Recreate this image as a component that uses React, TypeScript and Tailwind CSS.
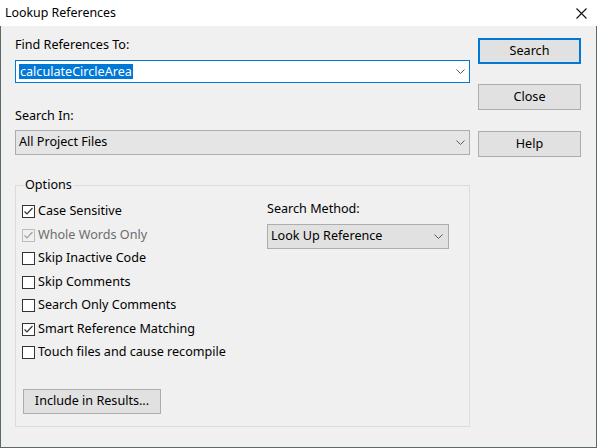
import React from "react";

const font = { fontFamily: '"Noto Sans", "Liberation Sans", sans-serif' };

function Chevron() {
  return (
    <svg width="9" height="5" viewBox="0 0 9 5" className="shrink-0">
      <polyline points="0.5,0.5 4.5,4.5 8.5,0.5" fill="none" stroke="#5a5a5a" strokeWidth="1" />
    </svg>
  );
}

function Check({ checked, disabled, label }: { checked?: boolean; disabled?: boolean; label: string }) {
  return (
    <div className="flex items-center h-[23.5px]">
      <div
        className={
          disabled
            ? "w-[13px] h-[13px] border border-[#bcbcbc] bg-[#f0f0f0] flex items-center justify-center"
            : "w-[13px] h-[13px] border border-[#333333] bg-white flex items-center justify-center"
        }
      >
        {checked && (
          <svg width="11" height="11" viewBox="0 0 11 11">
            <polyline
              points="1.5,5.5 4,8 9.5,2"
              fill="none"
              stroke={disabled ? "#a0a0a0" : "#333333"}
              strokeWidth="1.2"
            />
          </svg>
        )}
      </div>
      <span className={disabled ? "ml-[3px] text-[#6d6d6d]" : "ml-[3px] text-black"}>{label}</span>
    </div>
  );
}

function Button({ children, focused, className }: { children: React.ReactNode; focused?: boolean; className?: string }) {
  return (
    <div
      className={
        (focused
          ? "border-2 border-[#0078d7] "
          : "border border-[#adadad] ") +
        "bg-[#e1e1e1] flex items-center justify-center " +
        (className ?? "")
      }
    >
      {children}
    </div>
  );
}

export default function App() {
  return (
    <div className="w-[597px] h-[448px] bg-[#f0f0f0] text-[12.6px] text-black flex flex-col overflow-hidden" style={font}>
      {/* Title bar */}
      <div className="h-[26px] bg-white flex items-center justify-between pl-[5px] pr-[10px] shrink-0">
        <span className="text-[12.4px]">Lookup References</span>
        <svg width="11" height="11" viewBox="0 0 11 11">
          <path d="M0.5 0.5 L10.5 10.5 M10.5 0.5 L0.5 10.5" stroke="#111" strokeWidth="1.1" />
        </svg>
      </div>

      <div className="flex-1 flex border-l border-r border-b border-[#5b6b63] min-h-0">
        {/* Left column */}
        <div className="ml-[14px] w-[455px] flex flex-col">
          <div className="mt-[11px] h-[16px] leading-[16px]">Find References To:</div>
          <div className="mt-[7px] h-[23px] border border-[#0078d7] bg-white flex items-center justify-between pl-[3px] pr-[4px]">
            <span className="bg-[#0078d7] text-white leading-[15px] h-[15px] px-[1px]">calculateCircleArea</span>
            <Chevron />
          </div>
          <div className="mt-[25px] h-[16px] leading-[16px]">Search In:</div>
          <div className="mt-[6px] h-[25px] border border-[#adadad] bg-[#e5e5e5] flex items-center justify-between pl-[3px] pr-[4px]">
            <span>All Project Files</span>
            <Chevron />
          </div>

          {/* Options group */}
          <div className="mt-[30px] h-[242px] border border-[#dcdcdc] relative flex">
            <span className="absolute left-[8px] top-[-9px] px-[1px] bg-[#f0f0f0] leading-[16px]">Options</span>
            <div className="ml-[6px] mt-[14px] w-[245px] flex flex-col">
              <Check checked label="Case Sensitive" />
              <Check checked disabled label="Whole Words Only" />
              <Check label="Skip Inactive Code" />
              <Check label="Skip Comments" />
              <Check label="Search Only Comments" />
              <Check checked label="Smart Reference Matching" />
              <Check label="Touch files and cause recompile" />
              <Button className="mt-[24px] ml-[1px] w-[138px] h-[25px]">Include in Results...</Button>
            </div>
            <div className="mt-[15px] flex flex-col">
              <div className="h-[16px] leading-[16px]">Search Method:</div>
              <div className="mt-[7px] w-[182px] h-[25px] border border-[#adadad] bg-[#e1e1e1] flex items-center justify-between pl-[3px] pr-[5px]">
                <span>Look Up Reference</span>
                <Chevron />
              </div>
            </div>
          </div>
        </div>

        {/* Right column */}
        <div className="ml-[8px] w-[103px] flex flex-col">
          <Button focused className="mt-[12px] h-[26px]">Search</Button>
          <Button className="mt-[20px] h-[26px]">Close</Button>
          <Button className="mt-[21px] h-[26px]">Help</Button>
        </div>
      </div>
    </div>
  );
}
